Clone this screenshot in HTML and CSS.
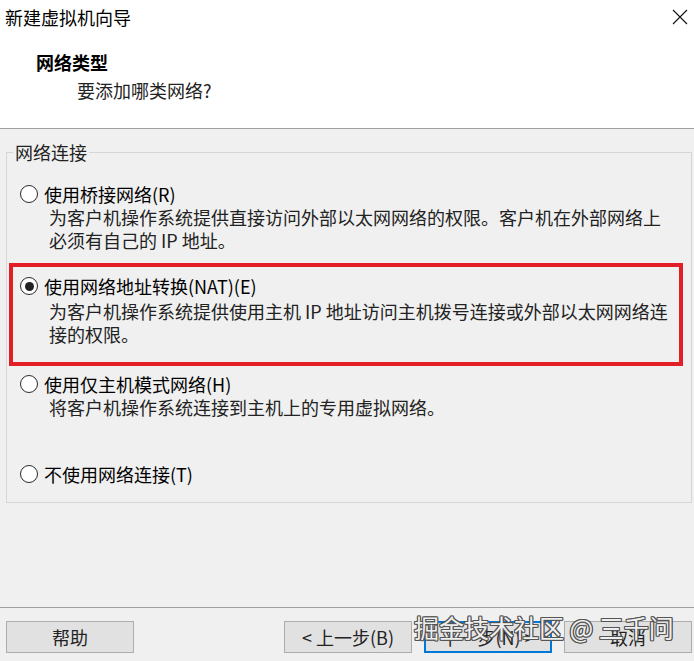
FILE: index.html
```html
<!DOCTYPE html>
<html lang="zh-CN">
<head>
<meta charset="utf-8">
<title>新建虚拟机向导</title>
<link rel="stylesheet" href="styles.css">
</head>
<body>
<div class="window">
  <header class="header">
    <div class="titlebar">
      <span class="title">新建虚拟机向导</span>
      <svg class="close" width="16" height="16" viewBox="0 0 16 16"><path d="M1 1 L15 15 M15 1 L1 15" stroke="#111" stroke-width="1.1" fill="none"/></svg>
    </div>
    <div class="heading">网络类型</div>
    <div class="subheading">要添加哪类网络?</div>
  </header>

  <main class="content">
    <fieldset class="group">
      <legend class="legend">网络连接</legend>

      <div class="option">
        <div class="option-row"><span class="radio"></span><span class="label">使用桥接网络(R)</span></div>
        <div class="desc">为客户机操作系统提供直接访问外部以太网网络的权限。客户机在外部网络上<br>必须有自己的 IP 地址。</div>
      </div>

      <div class="highlight">
        <div class="option">
          <div class="option-row"><span class="radio checked"></span><span class="label">使用网络地址转换(NAT)(E)</span></div>
          <div class="desc">为客户机操作系统提供使用主机 IP 地址访问主机拨号连接或外部以太网网络连<br>接的权限。</div>
        </div>
      </div>

      <div class="option after-highlight">
        <div class="option-row"><span class="radio"></span><span class="label">使用仅主机模式网络(H)</span></div>
        <div class="desc">将客户机操作系统连接到主机上的专用虚拟网络。</div>
      </div>

      <div class="option last">
        <div class="option-row"><span class="radio"></span><span class="label">不使用网络连接(T)</span></div>
      </div>
    </fieldset>
  </main>

  <footer class="footer">
    <button class="btn">帮助</button>
    <div class="nav">
      <button class="btn">&lt; 上一步(B)</button>
      <button class="btn default">下一步(N) &gt;</button>
      <button class="btn">取消</button>
    </div>
    <div class="watermark">掘金技术社区 @ 三千问</div>
  </footer>
</div>
</body>
</html>
```

FILE: styles.css
```css
* { box-sizing: border-box; }
html, body { margin: 0; padding: 0; }
body {
  font-family: "Noto Sans CJK SC", "Microsoft YaHei", sans-serif;
  font-size: 18px;
  color: #111;
  background: #f0f0f0;
}
.window {
  width: 694px;
  height: 661px;
  display: flex;
  flex-direction: column;
}
.header {
  background: #fff;
  height: 129px;
  border-bottom: 1px solid #a0a0a0;
}
.titlebar {
  height: 34px;
  display: flex;
  align-items: center;
  justify-content: space-between;
  padding: 0 6px 0 5px;
}
.title { font-size: 18px; line-height: 24px; color: #000; }
.close { display: block; }
.heading {
  margin-top: 16px;
  padding-left: 36px;
  font-weight: bold;
  line-height: 24px;
  color: #000;
}
.subheading {
  margin-top: 4px;
  padding-left: 77px;
  line-height: 24px;
  color: #222;
}
.content {
  flex: 1;
  padding-top: 11px;
}
.group {
  margin: 0 2px 0 6px;
  padding: 18px 0 16px 0;
  border: 1px solid #d6d6d6;
  min-width: 0;
}
.legend {
  margin-left: 6px;
  padding: 0 2px;
  line-height: 24px;
  color: #222;
}
.option { padding-left: 13px; min-height: 70px; }
.option.last { min-height: 24px; margin-top: 20px; }
.option.after-highlight { margin-top: 6px; }
.option-row {
  display: flex;
  align-items: center;
  height: 24px;
}
.radio {
  width: 18px;
  height: 18px;
  border: 1px solid #2a2a2a;
  border-radius: 50%;
  background: #fff;
  margin-right: 6px;
  display: flex;
  align-items: center;
  justify-content: center;
  flex: none;
}
.radio.checked::after {
  content: "";
  width: 9px;
  height: 9px;
  border-radius: 50%;
  background: #222;
}
.label { line-height: 24px; color: #000; }
.desc {
  padding-left: 29px;
  line-height: 23px;
  color: #222;
  white-space: nowrap;
}
.highlight {
  margin: 11px 8px 0 2px;
  border: 4px solid #e21e26;
  padding: 7px 0 16px 0;
}
.highlight .option { padding-left: 7px; }
.highlight .desc { padding-top: 2px; }
.footer {
  position: relative;
  height: 54px;
  border-top: 1px solid #a0a0a0;
  padding: 13px 2px 8px 6px;
  display: flex;
  justify-content: space-between;
}
.nav { display: flex; gap: 12px; }
.btn {
  width: 128px;
  height: 32px;
  background: #e1e1e1;
  border: 1px solid #adadad;
  font-family: "Noto Sans CJK SC", sans-serif;
  font-size: 18px;
  color: #222;
  padding: 0;
}
.btn.default { border: 2px solid #0078d7; }
.watermark {
  position: absolute;
  left: 414px;
  top: 2px;
  font-size: 25px;
  line-height: 34px;
  color: rgba(255, 255, 255, 0.92);
  white-space: nowrap;
  text-shadow: 1px 0 0 #555, -1px 0 0 #555, 0 1px 0 #555, 0 -1px 0 #555, 1px 1px 0 #555, -1px -1px 0 #555, 1px -1px 0 #555, -1px 1px 0 #555;
}
```
